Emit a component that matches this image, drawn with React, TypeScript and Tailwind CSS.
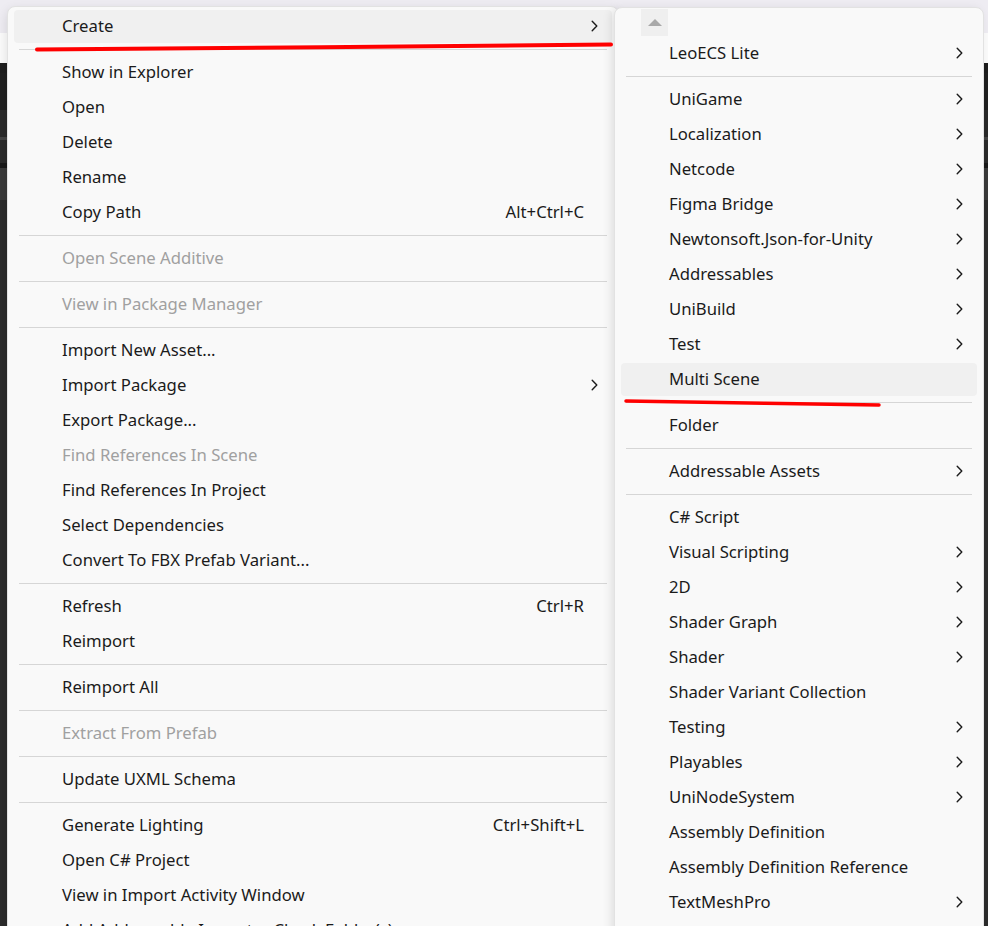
import React from "react";

type Item =
  | { kind: "sep" }
  | {
      kind?: "item";
      t: string;
      sub?: boolean;
      sc?: string;
      dis?: boolean;
      hl?: boolean;
    };

const S: Item = { kind: "sep" };

const leftItems: Item[] = [
  { t: "Create", sub: true, hl: true },
  S,
  { t: "Show in Explorer" },
  { t: "Open" },
  { t: "Delete" },
  { t: "Rename" },
  { t: "Copy Path", sc: "Alt+Ctrl+C" },
  S,
  { t: "Open Scene Additive", dis: true },
  S,
  { t: "View in Package Manager", dis: true },
  S,
  { t: "Import New Asset..." },
  { t: "Import Package", sub: true },
  { t: "Export Package..." },
  { t: "Find References In Scene", dis: true },
  { t: "Find References In Project" },
  { t: "Select Dependencies" },
  { t: "Convert To FBX Prefab Variant..." },
  S,
  { t: "Refresh", sc: "Ctrl+R" },
  { t: "Reimport" },
  S,
  { t: "Reimport All" },
  S,
  { t: "Extract From Prefab", dis: true },
  S,
  { t: "Update UXML Schema" },
  S,
  { t: "Generate Lighting", sc: "Ctrl+Shift+L" },
  { t: "Open C# Project" },
  { t: "View in Import Activity Window" },
  { t: "Add Addressable Importer Check Folder(s)" },
];

const rightItems: Item[] = [
  { t: "LeoECS Lite", sub: true },
  S,
  { t: "UniGame", sub: true },
  { t: "Localization", sub: true },
  { t: "Netcode", sub: true },
  { t: "Figma Bridge", sub: true },
  { t: "Newtonsoft.Json-for-Unity", sub: true },
  { t: "Addressables", sub: true },
  { t: "UniBuild", sub: true },
  { t: "Test", sub: true },
  { t: "Multi Scene", hl: true },
  S,
  { t: "Folder" },
  S,
  { t: "Addressable Assets", sub: true },
  S,
  { t: "C# Script" },
  { t: "Visual Scripting", sub: true },
  { t: "2D", sub: true },
  { t: "Shader Graph", sub: true },
  { t: "Shader", sub: true },
  { t: "Shader Variant Collection" },
  { t: "Testing", sub: true },
  { t: "Playables", sub: true },
  { t: "UniNodeSystem", sub: true },
  { t: "Assembly Definition" },
  { t: "Assembly Definition Reference" },
  { t: "TextMeshPro", sub: true },
];

function Chevron() {
  return (
    <svg width="7" height="12" viewBox="0 0 7 12" className="shrink-0">
      <path
        d="M1.2 1.2 L5.8 6 L1.2 10.8"
        fill="none"
        stroke="#1c1c1c"
        strokeWidth="1.4"
        strokeLinecap="round"
        strokeLinejoin="round"
      />
    </svg>
  );
}

function MenuList({ items }: { items: Item[] }) {
  return (
    <div className="flex flex-col">
      {items.map((it, i) => {
        if (it.kind === "sep") {
          return (
            <div key={i} className="h-[11px] flex items-center px-[5px]">
              <div className="h-px w-full bg-[#d6d6d6]" />
            </div>
          );
        }
        return (
          <div key={i} className="h-[35px] py-px">
            <div
              className={
                "h-[33px] rounded-[4px] flex items-center pl-[48px] pb-[1px] " +
                (it.sub ? "pr-[14px] " : "pr-[28px] ") +
                (it.hl ? "bg-[#f0f0f0]" : "")
              }
            >
              <span
                className={
                  "flex-1 whitespace-nowrap " +
                  (it.dis ? "text-[#a0a0a0]" : "text-[#1b1b1b]")
                }
              >
                {it.t}
              </span>
              {it.sc && (
                <span className="whitespace-nowrap text-[#1b1b1b]">{it.sc}</span>
              )}
              {it.sub && <Chevron />}
            </div>
          </div>
        );
      })}
    </div>
  );
}

export default function App() {
  return (
    <div
      className="relative w-[988px] h-[926px] overflow-hidden text-[16.7px] leading-none"
      style={{ fontFamily: '"Noto Sans", "Open Sans", sans-serif' }}
    >
      {/* background desktop bands */}
      <div className="flex flex-col w-full h-full">
        <div className="h-[33px] bg-[#eeecf2]" />
        <div className="h-[30px] bg-[#fbfbfb]" />
        <div className="h-[10px] bg-[#1e1e1e]" />
        <div className="h-[37px] bg-[#202020]" />
        <div className="h-[27px] bg-[#2a2a2a]" />
        <div className="h-[3px] bg-[#444444]" />
        <div className="h-[23px] bg-[#2b2b2b]" />
        <div className="h-[5px] bg-[#1a1a1a]" />
        <div className="h-[32px] bg-[#3a3a3a]" />
        <div className="flex-1 bg-[#2c2c2c]" />
      </div>

      {/* left context menu */}
      <div className="absolute left-[7px] top-[6px] w-[612px] h-[960px] rounded-[8px] border border-[#e2e2e2] bg-[#f9f9f9] shadow-[0_4px_12px_rgba(0,0,0,0.12)] px-[6px] pt-[2px]">
        <MenuList items={leftItems} />
      </div>

      {/* right submenu */}
      <div className="absolute left-[614px] top-[7px] w-[370px] h-[960px] rounded-[8px] border border-[#e2e2e2] bg-[#f9f9f9] shadow-[-3px_2px_10px_rgba(0,0,0,0.10)] px-[6px]">
        <div className="h-[28px] flex items-start">
          <div className="ml-[20px] mt-px w-[27px] h-[27px] bg-[#efefef] flex items-center justify-center">
            <svg width="16" height="9" viewBox="0 0 16 9">
              <path d="M1 8 L8 1 L15 8 Z" fill="#a8a8a8" />
            </svg>
          </div>
        </div>
        <MenuList items={rightItems} />
      </div>

      {/* red annotation strokes */}
      <svg
        className="absolute inset-0 pointer-events-none"
        width="988"
        height="926"
        viewBox="0 0 988 926"
      >
        <path
          d="M37 49.5 C 200 48.5, 450 46, 611 44.5"
          fill="none"
          stroke="#ff0000"
          strokeWidth="4"
          strokeLinecap="round"
        />
        <path
          d="M626 401 C 700 402, 800 404, 879 405"
          fill="none"
          stroke="#ff0000"
          strokeWidth="3.5"
          strokeLinecap="round"
        />
      </svg>
    </div>
  );
}
